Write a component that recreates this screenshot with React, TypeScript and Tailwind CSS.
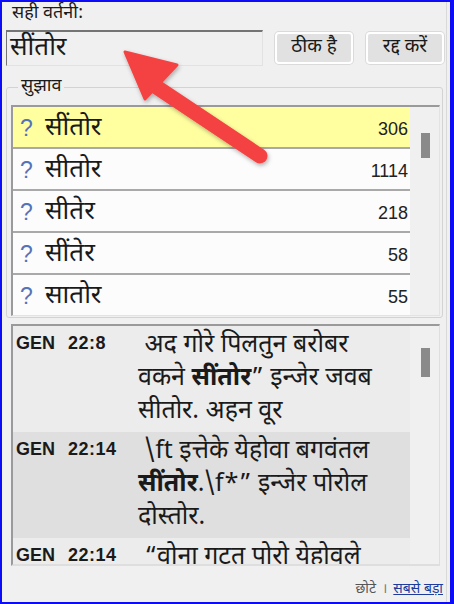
import React from "react";

const DEVA = {
  fontFamily:
    '"Nirmala UI", "Mangal", "Noto Sans Devanagari", "Lohit Devanagari", "Noto Sans", "Liberation Sans", sans-serif',
};
const SANS = { fontFamily: '"Liberation Sans", Arial, sans-serif' };

const suggestions = [
  { word: "सींतोर", n: "306", sel: true },
  { word: "सीतोर", n: "1114" },
  { word: "सीतेर", n: "218" },
  { word: "सींतेर", n: "58" },
  { word: "सातोर", n: "55" },
];

function Btn({ label, className }: { label: string; className?: string }) {
  return (
    <div
      className={
        "h-[32px] w-[78px] rounded-[4px] border-2 border-white bg-[#e1e1e1] shadow-[0_0_0_1px_#dadada] flex items-center justify-center text-[19px] leading-[24px] text-[#1a1a1a] " +
        (className ?? "")
      }
      style={DEVA}
    >
      <span>{label}</span>
    </div>
  );
}

function Scroll({ top, h }: { top: string; h: string }) {
  return (
    <div className="w-[29px] shrink-0 bg-[#f0f0f0] flex flex-col">
      <div className={top} />
      <div className={"ml-[11px] w-[9px] bg-[#8a8a8a] " + h} />
    </div>
  );
}

function Ref({
  ref_,
  lines,
  bg,
  h,
  pt,
}: {
  ref_: [string, string];
  lines: React.ReactNode[];
  bg: string;
  h: string;
  pt: string;
}) {
  return (
    <div className={"flex shrink-0 pl-[3px] " + bg + " " + h + " " + pt}>
      <div
        className="w-[122px] shrink-0 h-[33px] flex items-center text-[18px] font-bold text-[#1a1a1a] whitespace-pre"
        style={SANS}
      >
        <span>{ref_[0]}</span>
        <span className="ml-[13px] tracking-[0.5px]">{ref_[1]}</span>
      </div>
      <div className="flex flex-col text-[25px] text-[#1a1a1a] mt-[3px]" style={DEVA}>
        {lines.map((l, i) => (
          <div key={i} className="h-[33px] leading-[33px] whitespace-pre">
            {l}
          </div>
        ))}
      </div>
    </div>
  );
}

export default function App() {
  return (
    <div className="relative w-[454px] h-[604px] bg-[#f0f0f0] border-l-2 border-t-2 border-b-2 border-r-4 border-[#0c0cf6] overflow-hidden">
      <div className="h-full mr-[3px] border-r border-[#d9d9d9] flex flex-col">
        {/* label */}
        <div className="h-[28px] pl-[10px] pt-[1px] text-[18px] leading-[22px] text-[#1a1a1a]" style={DEVA}>
          सही वर्तनी:
        </div>
        {/* input + buttons */}
        <div className="flex h-[36px] items-start">
          <div
            className="ml-[4px] w-[257px] h-[36px] border-t-2 border-l border-[#747474] border-r border-b border-r-[#e2e2e2] border-b-[#e2e2e2] bg-[#f0f0f0] pl-[3px] flex items-center text-[26px] leading-[34px] text-[#1a1a1a]"
            style={DEVA}
          >
            <span className="mt-[1px]">सींतोर</span>
          </div>
          <Btn label="ठीक है" className="ml-[12px] mt-[2px]" />
          <Btn label="रद्द करें" className="ml-[13px] mt-[2px]" />
        </div>
        {/* fieldset */}
        <div className="relative mt-[21px] ml-[4px] w-[437px] h-[231px] border border-[#d3d3d3] rounded-[3px] pt-[17px] pl-[4px]">
          <div
            className="absolute -top-[13px] left-[11px] px-[3px] bg-[#f0f0f0] text-[18px] leading-[24px] text-[#1a1a1a]"
            style={DEVA}
          >
            सुझाव
          </div>
          <div className="w-[429px] h-[211px] flex border-t-2 border-l-2 border-[#9a9a9a] border-b border-r border-b-[#e3e3e3] border-r-[#e3e3e3]">
            <div className="w-[397px] flex flex-col">
              {suggestions.map((s, i) => (
                <React.Fragment key={i}>
                  {i > 0 && <div className="h-[2px] bg-[#a9a9a9] shrink-0" />}
                  <div
                    className={
                      "h-[40px] shrink-0 flex items-center pl-[7px] pr-[2px] " +
                      (s.sel ? "bg-[#ffffa0]" : "bg-[#fcfcfc]")
                    }
                  >
                    <span className="w-[25px] text-[23px] leading-[30px] text-[#5473b8] mt-[2px]" style={SANS}>
                      ?
                    </span>
                    <span className="flex-1 text-[26px] leading-[34px] text-[#1a1a1a] mt-[4px]" style={DEVA}>
                      {s.word}
                    </span>
                    <span className="text-[18px] leading-[22px] text-[#222] mt-[4px]" style={SANS}>
                      {s.n}
                    </span>
                  </div>
                </React.Fragment>
              ))}
            </div>
            <Scroll top="h-[26px]" h="h-[25px]" />
          </div>
        </div>
        {/* references */}
        <div className="mt-[6px] ml-[9px] w-[429px] h-[242px] flex border-t-2 border-l-2 border-[#9a9a9a] border-b-2 border-r border-b-[#dedede] border-r-[#dedede]">
          <div className="w-[397px] h-[238px] overflow-hidden flex flex-col">
            <Ref
              ref_={["GEN", "22:8"]}
              bg="bg-[#ececec]"
              h="h-[106px]"
              pt="pt-[1px]"
              lines={[
                " अद गोरे पिलतुन बरोबर",
                <>
                  वकने <b>सींतोर</b>” इन्जेर जवब
                </>,
                "सीतोर. अहन वूर",
              ]}
            />
            <Ref
              ref_={["GEN", "22:14"]}
              bg="bg-[#dfdfdf]"
              h="h-[106px]"
              pt="pt-[1px]"
              lines={[
                " \\ft इत्तेके येहोवा बगवंतल",
                <>
                  <b>सींतोर</b>.\f*” इन्जेर पोरोल
                </>,
                "दोस्तोर.",
              ]}
            />
            <Ref
              ref_={["GEN", "22:14"]}
              bg="bg-[#ececec]"
              h="h-[40px]"
              pt="pt-[1px]"
              lines={[" “वोना गटत पोरो येहोवले"]}
            />
          </div>
          <Scroll top="h-[22px]" h="h-[29px]" />
        </div>
        {/* footer */}
        <div className="flex justify-end items-center pr-[3px] mt-[12px] h-[22px] text-[14px]" style={DEVA}>
          <span className="text-[#555]">छोटे</span>
          <span className="mx-[6px] text-[#777]">।</span>
          <span className="text-[#1c3b9c] underline">सबसे बड़ा</span>
        </div>
      </div>
      {/* red annotation arrow */}
      <svg
        className="absolute left-0 top-0 pointer-events-none"
        width="454"
        height="604"
        viewBox="0 0 454 604"
      >
        <defs>
          <filter id="sh" x="-20%" y="-20%" width="140%" height="140%">
            <feDropShadow dx="1" dy="2" stdDeviation="2" floodColor="#000" floodOpacity="0.3" />
          </filter>
        </defs>
        <g filter="url(#sh)" fill="#f44343" stroke="#f44343" strokeLinejoin="round">
          <line x1="150" y1="82" x2="258" y2="154" strokeWidth="15" strokeLinecap="round" />
          <polygon points="123,50 175,63 143,97" strokeWidth="3" />
        </g>
      </svg>
    </div>
  );
}
